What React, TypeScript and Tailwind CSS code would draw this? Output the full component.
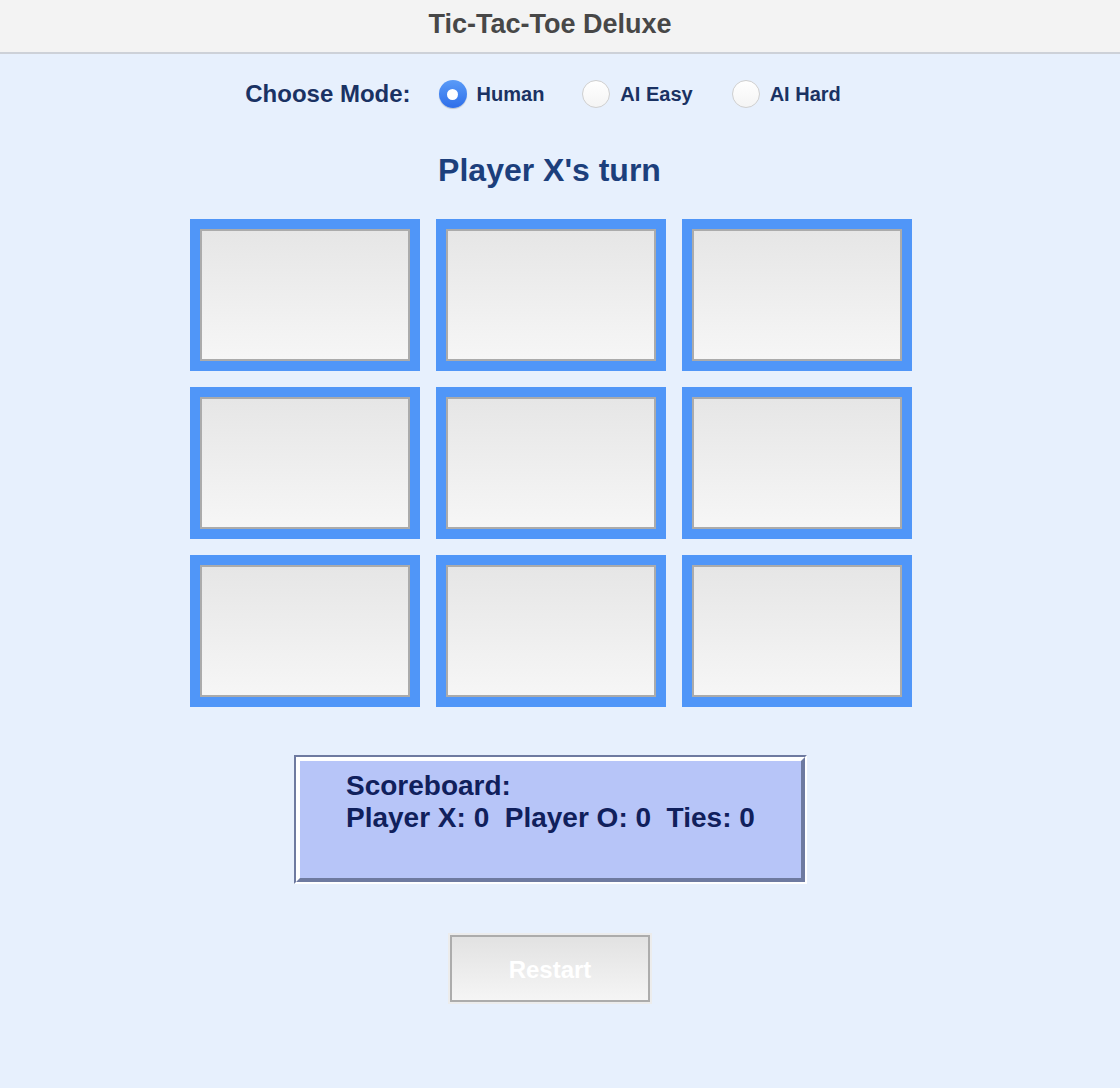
import React from "react";

const font = { fontFamily: '"Liberation Sans", Arial, sans-serif' };

function Radio({ checked, label }: { checked?: boolean; label: string }) {
  return (
    <div className="flex items-center">
      {checked ? (
        <div className="w-[28px] h-[28px] rounded-full bg-gradient-to-b from-[#5a9bf8] to-[#2f6ee9] flex items-center justify-center shadow-[0_1px_1px_rgba(0,0,0,0.2)]">
          <div className="w-[11px] h-[11px] rounded-full bg-white" />
        </div>
      ) : (
        <div className="w-[28px] h-[28px] rounded-full bg-gradient-to-b from-white to-[#f4f4f4] border border-[#cfcfcf]" />
      )}
      <span className="ml-[10px] text-[20px] font-bold text-[#1a3263]">{label}</span>
    </div>
  );
}

function Cell() {
  return (
    <div className="w-[230px] h-[152px] bg-[#5096f8] p-[10px]">
      <div className="w-full h-full border-2 border-[#ababab] bg-gradient-to-b from-[#e6e6e6] to-[#f6f6f6]" />
    </div>
  );
}

export default function App() {
  return (
    <div className="w-[1120px] h-[1088px] bg-[#e7f0fd] overflow-hidden" style={font}>
      <div className="h-[54px] bg-[#f3f3f3] border-b-2 border-[#cdd1d8] flex items-center justify-center pr-[20px] pb-[4px]">
        <h1 className="text-[27px] font-bold text-[#474747] leading-none">Tic-Tac-Toe Deluxe</h1>
      </div>
      <div className="flex flex-col items-center pr-[18px]">
        <div className="mt-[26px] h-[28px] flex items-center pr-[16px]">
          <span className="text-[24px] font-bold text-[#1a3263] mr-[28px]">Choose Mode:</span>
          <Radio checked label="Human" />
          <div className="w-[38px]" />
          <Radio label="AI Easy" />
          <div className="w-[39px]" />
          <Radio label="AI Hard" />
        </div>
        <div className="mt-[44px] mr-[3px] text-[32px] font-bold text-[#1c3f7c] leading-[36px]">Player X's turn</div>
        <div className="mt-[31px] grid grid-cols-3 gap-[16px]">
          {Array.from({ length: 9 }).map((_, i) => (
            <Cell key={i} />
          ))}
        </div>
        <div className="mt-[48px] mr-[1px] w-[513px] h-[129px] border-t-2 border-l-2 border-t-[#6e7aa0] border-l-[#6e7aa0] border-b-2 border-r-2 border-b-white border-r-white">
          <div className="w-full h-full border-t-4 border-l-4 border-t-white border-l-white border-b-4 border-r-4 border-b-[#6e7aa0] border-r-[#6e7aa0] bg-[#b7c5f8] pl-[46px] pt-[9px]">
            <div className="text-[28px] font-bold text-[#10205c] leading-[32px] whitespace-pre">
              {"Scoreboard:\nPlayer X: 0  Player O: 0  Ties: 0"}
            </div>
          </div>
        </div>
        <div className="mt-[49px] mr-[2px] p-[2px] bg-[#ececec]">
          <div className="w-[200px] h-[67px] pt-[3px] border-2 border-[#acacac] bg-gradient-to-b from-[#e2e2e2] to-[#f5f5f5] flex items-center justify-center">
            <span className="text-[24px] font-bold text-white">Restart</span>
          </div>
        </div>
      </div>
    </div>
  );
}
